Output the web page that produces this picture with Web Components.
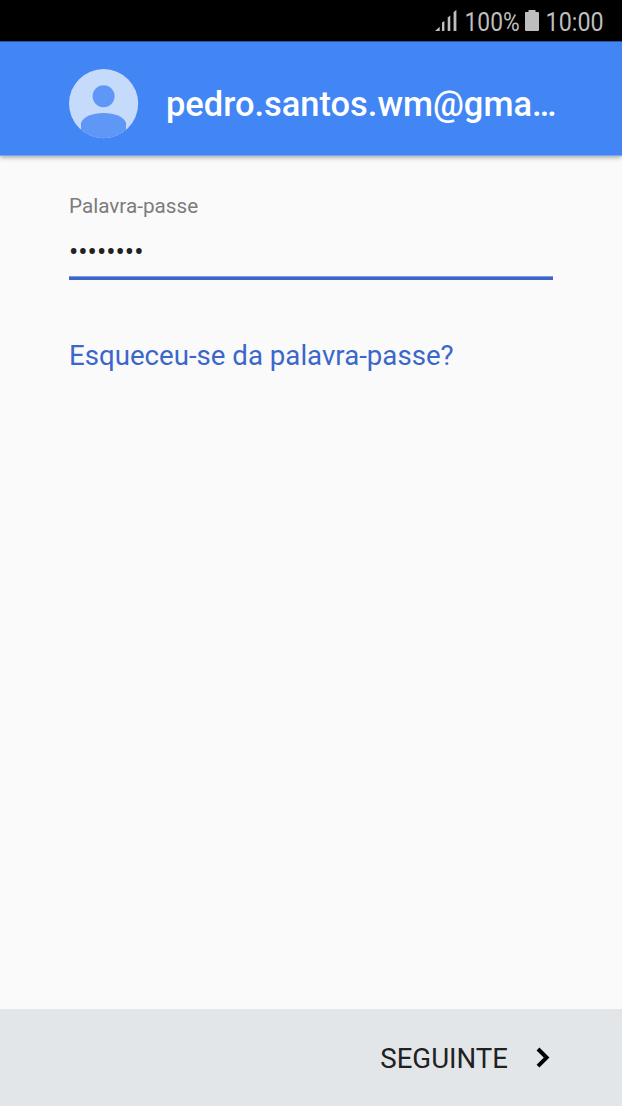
<!DOCTYPE html>
<html lang="pt">
<head>
<meta charset="utf-8">
<title>Palavra-passe</title>
<style>
    html, body{
        height: 100%;
        margin: 0;
        overflow: hidden;
        font-family: Roboto, sans-serif;
        background: #fafafa;
    }
</style>
</head>
<body>

<login-screen>
    <status-bar slot="status" battery="100%" time="10:00"></status-bar>
    <account-header slot="header">pedro.santos.wm@gma…</account-header>
    <password-field label="Palavra-passe">••••••••</password-field>
    <text-link>Esqueceu-se da palavra-passe?</text-link>
    <next-bar slot="footer">SEGUINTE</next-bar>
</login-screen>

<script>

// page frame: status, header, content, footer
customElements.define('login-screen', class LoginScreen extends HTMLElement{

    constructor(){

        super();
        this.attachShadow({mode: 'open'});
        this.shadowRoot.innerHTML = `
            <style>
                :host{
                    display: flex;
                    flex-direction: column;
                    height: 1106px;
                    background: #fafafa;
                }
                main{
                    flex: 1;
                    padding: 37px 69px 0;
                }
            </style>
            <slot name="status"></slot>
            <slot name="header"></slot>
            <main><slot></slot></main>
            <slot name="footer"></slot>
        `

    }

});

// the bar uses a condensed face, so the texts are fitted with textLength
customElements.define('status-bar', class StatusBar extends HTMLElement{

    constructor(){

        super();
        this.attachShadow({mode: 'open'});
        this.shadowRoot.innerHTML = `
            <style>
                :host{
                    display: flex;
                    justify-content: flex-end;
                    height: 41px;
                    padding-right: 14px;
                    box-sizing: border-box;
                    background: #000;
                }
                svg{
                    display: block;
                    overflow: visible;
                    fill: #bebebe;
                }
                text{
                    font-family: Roboto, sans-serif;
                    font-size: 26px;
                }
            </style>
            <svg width="23" height="41">
                <path d="M0 31L4.7 26.7V31ZM7 22.5L9.4 21V31H7ZM12.7 17.5L15.3 15.5V31H12.7ZM18.6 12L21.4 10V31H18.6Z"/>
            </svg>
            <svg width="66" height="41"><text x="6.6" y="30.5" textLength="55" lengthAdjust="spacingAndGlyphs">${this.getAttribute('battery')}</text></svg>
            <svg width="16" height="41">
                <path d="M1.5 12H4.5V10H11.5V12H14Q15 12 15 13V30Q15 31 14 31H2Q1 31 1 30V13Q1 12 1.5 12Z"/>
            </svg>
            <svg width="68" height="41"><text x="5.6" y="30.5" textLength="58" lengthAdjust="spacingAndGlyphs">${this.getAttribute('time')}</text></svg>
        `

    }

});

customElements.define('account-header', class AccountHeader extends HTMLElement{

    constructor(){

        super();
        this.attachShadow({mode: 'open'});
        this.shadowRoot.innerHTML = `
            <style>
                :host{
                    display: flex;
                    gap: 27px;
                    height: 115px;
                    padding: 27px 60px 0 69px;
                    box-sizing: border-box;
                    background: #4285f4;
                    border-top: 1px solid #2b569e;
                    border-bottom: 1px solid #7ba6ee;
                    box-shadow: 0 1px 5px rgba(0,0,0,.4);
                    color: #fff;
                    font-size: 34.45px;
                    font-weight: 500;
                    line-height: 70px;
                    white-space: nowrap;
                }
                svg{
                    flex: none;
                    display: block;
                }
            </style>
            <svg width="70" height="70" viewBox="0 0 70 70">
                <clipPath id="disc"><circle cx="34.6" cy="34.6" r="34.6"/></clipPath>
                <g clip-path="url(#disc)">
                    <rect width="70" height="70" fill="#c6dafc"/>
                    <circle cx="34.6" cy="27.3" r="11" fill="#5e97f6"/>
                    <path d="M12 70V54C14 47.5 24 44 34.6 44S55 47.5 57 54V70Z" fill="#5e97f6"/>
                </g>
            </svg>
            <span><slot></slot></span>
        `

    }

});

customElements.define('password-field', class PasswordField extends HTMLElement{

    constructor(){

        super();
        this.attachShadow({mode: 'open'});
        this.shadowRoot.innerHTML = `
            <style>
                :host{
                    display: block;
                    height: 87px;
                    width: 484px;
                    box-sizing: border-box;
                    border-bottom: 3px solid #3b67cb;
                    box-shadow: inset 0 -1px #7d9bde;
                    color: #212121;
                }
                label{
                    display: block;
                    height: 43px;
                    font-size: 20.7px;
                    line-height: 26px;
                    color: #7c7c7c;
                }
                div{
                    font-size: 27.6px;
                    line-height: 32px;
                }
            </style>
            <label>${this.getAttribute('label')}</label>
            <div><slot></slot></div>
        `

    }

});

customElements.define('text-link', class TextLink extends HTMLElement{

    constructor(){

        super();
        this.attachShadow({mode: 'open'});
        this.shadowRoot.innerHTML = `
            <style>
                :host{
                    display: block;
                    margin-top: 60px;
                    font-size: 27.65px;
                    line-height: 32px;
                    color: #3b67cb;
                }
            </style>
            <slot></slot>
        `

    }

});

customElements.define('next-bar', class NextBar extends HTMLElement{

    constructor(){

        super();
        this.attachShadow({mode: 'open'});
        this.shadowRoot.innerHTML = `
            <style>
                :host{
                    display: flex;
                    align-items: center;
                    justify-content: flex-end;
                    gap: 28px;
                    height: 97px;
                    padding-right: 71px;
                    box-sizing: border-box;
                    background: #e2e6e9;
                    color: #212121;
                    font-size: 27.6px;
                    line-height: 32px;
                }
                span{
                    padding-top: 2px;
                }
                svg{
                    display: block;
                }
            </style>
            <span><slot></slot></span>
            <svg width="15" height="22" viewBox="0 0 15 22">
                <path d="M2 2L10.6 10.6L2 19.2" fill="none" stroke="#000" stroke-width="4"/>
            </svg>
        `

    }

});

</script>
</body>
</html>
